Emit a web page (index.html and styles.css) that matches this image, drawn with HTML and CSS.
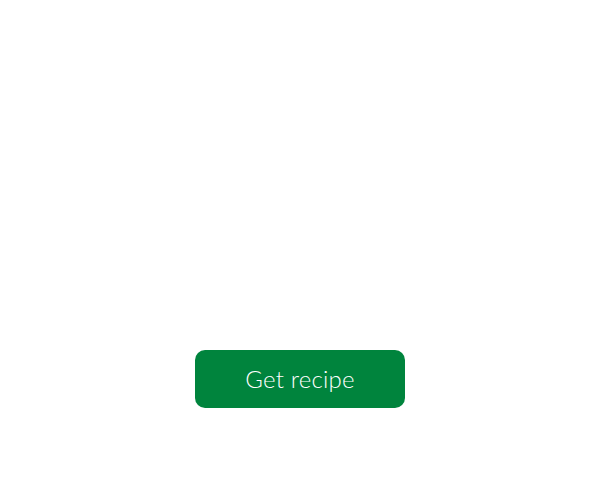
FILE: index.html
```html
<!DOCTYPE html>
<html lang="en">
<head>
<meta charset="utf-8">
<title>Get recipe</title>
<link rel="stylesheet" href="styles.css">
</head>
<body>
<main class="page">
  <button class="cta" type="button">Get recipe</button>
</main>
</body>
</html>
```
FILE: styles.css
```css
html, body {
  margin: 0;
  padding: 0;
  background: #ffffff;
}
.page {
  height: 500px;
  box-sizing: border-box;
  display: flex;
  flex-direction: column;
  align-items: center;
  padding-top: 350px;
}
.cta {
  width: 210px;
  height: 58px;
  border: none;
  border-radius: 10px;
  background: #00843d;
  color: #ffffff;
  font-family: Lato, "Open Sans", sans-serif;
  font-size: 24px;
  font-weight: 300;
  letter-spacing: 0.2px;
  padding: 0 0 2px 0;
  cursor: pointer;
}
```
